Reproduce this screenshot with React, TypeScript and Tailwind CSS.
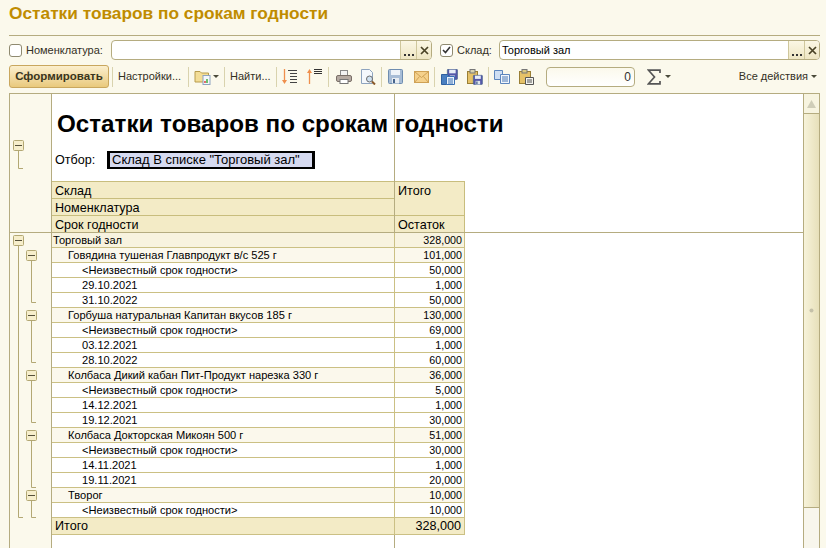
import React from "react";

const rows: [string, string, number][] = [
  ["Торговый зал", "328,000", 0],
  ["Говядина тушеная Главпродукт в/с 525 г", "101,000", 1],
  ["<Неизвестный срок годности>", "50,000", 2],
  ["29.10.2021", "1,000", 2],
  ["31.10.2022", "50,000", 2],
  ["Горбуша натуральная Капитан вкусов 185 г", "130,000", 1],
  ["<Неизвестный срок годности>", "69,000", 2],
  ["03.12.2021", "1,000", 2],
  ["28.10.2022", "60,000", 2],
  ["Колбаса Дикий кабан Пит-Продукт нарезка 330 г", "36,000", 1],
  ["<Неизвестный срок годности>", "5,000", 2],
  ["14.12.2021", "1,000", 2],
  ["19.12.2021", "30,000", 2],
  ["Колбаса Докторская Микоян 500 г", "51,000", 1],
  ["<Неизвестный срок годности>", "30,000", 2],
  ["14.11.2021", "1,000", 2],
  ["19.11.2021", "20,000", 2],
  ["Творог", "10,000", 1],
  ["<Неизвестный срок годности>", "10,000", 2],
];

const Sep = ({ ml, mr }: { ml: string; mr: string }) => (
  <div className={`w-px h-[20px] bg-[#d9d3ae] ${ml} ${mr}`} />
);

const Box = ({ x, y }: { x: number; y: number }) => (
  <g>
    <rect x={x + 0.5} y={y + 0.5} width={10} height={10} rx={1} fill="#f6eecb" stroke="#b3a874" />
    <path d={`M${x + 2} ${y + 5.5}H${x + 9}`} stroke="#55503a" />
  </g>
);

const Caret = () => (
  <svg width="6" height="3" viewBox="0 0 6 3" className="shrink-0"><path d="M0 0h6L3 3z" fill="#4a4a3a" /></svg>
);

const FieldButtons = () => (
  <>
    <div className="w-[16px] h-full border-l border-[#cfc79c] bg-gradient-to-b from-[#fbf7e4] to-[#eee6c3] flex items-end justify-center pb-[3px]">
      <svg width="10" height="2" viewBox="0 0 10 2"><path d="M0 0h2v2H0zM4 0h2v2H4zM8 0h2v2H8z" fill="#333" /></svg>
    </div>
    <div className="w-[15px] h-full border-l border-[#cfc79c] bg-gradient-to-b from-[#fbf7e4] to-[#eee6c3] flex items-center justify-center">
      <svg width="9" height="9" viewBox="0 0 9 9"><path d="M1 1l7 7M8 1L1 8" stroke="#4a4326" strokeWidth="1.7" /></svg>
    </div>
  </>
);

const Check = ({ on }: { on?: boolean }) => (
  <div className="w-[13px] h-[13px] rounded-[3px] border border-[#8f8a70] bg-white flex items-center justify-center shrink-0">
    {on && (
      <svg width="9" height="8" viewBox="0 0 9 8"><path d="M1 4l2.5 2.5L8 1" fill="none" stroke="#333" strokeWidth="1.6" /></svg>
    )}
  </div>
);

const Gutter = () => {
  const lvl2 = [
    [250, 302],
    [310, 362],
    [370, 422],
    [430, 487],
    [490, 517],
  ];
  return (
    <svg width="41" height="454" viewBox="10 94 41 454" className="block">
      <g fill="none" stroke="#b3a874">
        <path d="M18.5 151V168.5H23" />
        <path d="M18.5 245V517.5H23" />
        {lvl2.map(([a, b]) => (
          <path key={a} d={`M31.5 ${a + 10}V${b + 0.5}H36`} />
        ))}
      </g>
      <Box x={13} y={140} />
      <Box x={13} y={235} />
      {lvl2.map(([a]) => (
        <Box key={a} x={26} y={a} />
      ))}
    </svg>
  );
};

const Ic = ({ children, w = 16, h = 16, vb = "0 0 16 16", cls = "" }: { children: React.ReactNode; w?: number; h?: number; vb?: string; cls?: string }) => (
  <svg width={w} height={h} viewBox={vb} className={`shrink-0 ${cls}`}>{children}</svg>
);

const Floppy = ({ c = "#5f86b5" }: { c?: string }) => (
  <g>
    <rect x=".5" y=".5" width="14" height="14" rx="1" fill={c} stroke="#46648c" />
    <rect x="3" y="1" width="9" height="5" fill="#e8eef6" />
    <rect x="4" y="9" width="7" height="5.5" fill="#dfe5ec" />
    <rect x="5" y="10" width="2" height="4" fill="#46648c" />
  </g>
);

export default function App() {
  return (
    <div className="w-[826px] h-[548px] overflow-hidden bg-[#fbf9ec] flex flex-col font-['Liberation_Sans',Arial,sans-serif] text-[#222]">
      <div className="h-[36px] ml-[9px] mr-[6px] border-b border-[#b5ac80] pt-[4px] text-[17.3px] leading-[18px] font-bold text-[#c08c00] whitespace-nowrap shrink-0">
        Остатки товаров по срокам годности
      </div>

      <div className="h-[20px] mt-[4px] ml-[9px] mr-[6px] flex items-center text-[11px] text-[#33301f] shrink-0">
        <Check />
        <span className="ml-[4px] w-[85px]">Номенклатура:</span>
        <div className="w-[321px] h-full flex rounded-[4px] border border-[#b5ac80] bg-white overflow-hidden">
          <div className="flex-1" />
          <FieldButtons />
        </div>
        <div className="ml-[8px]"><Check on /></div>
        <span className="ml-[4px] w-[42px]">Склад:</span>
        <div className="flex-1 h-full flex rounded-[4px] border border-[#b5ac80] bg-white overflow-hidden">
          <div className="flex-1 pl-[2px] text-[11px] leading-[18px] text-black">Торговый зал</div>
          <FieldButtons />
        </div>
      </div>

      <div className="h-[23px] mt-[5px] ml-[9px] mr-[6px] flex items-center text-[11px] text-[#33301f] shrink-0">
        <div className="w-[100px] h-[23px] rounded-[3px] border border-[#c9a75e] bg-gradient-to-b from-[#fbefcd] to-[#e9c97c] flex items-center justify-center font-bold text-[11.5px] text-[#3a3520]">
          Сформировать
        </div>
        <Sep ml="ml-[3px]" mr="mr-[5px]" />
        <span className="w-[65px] whitespace-nowrap">Настройки...</span>
        <Sep ml="ml-[5px]" mr="mr-[5px]" />
        <Ic w={17} h={16}>
          <path d="M.5 2.5h5l1.5 1.5h7v9H.5z" fill="#f3dd96" stroke="#b89c4c" />
          <rect x="8.5" y="6.5" width="7" height="9" fill="#f4f7fb" stroke="#8ea4bf" />
          <path d="M10.5 14v-2" stroke="#d33" strokeWidth="1.4" /><path d="M12.5 14v-4" stroke="#3a3" strokeWidth="1.4" />
        </Ic>
        <span className="ml-[2px]"><Caret /></span>
        <Sep ml="ml-[5px]" mr="mr-[5px]" />
        <span className="w-[41px] whitespace-nowrap">Найти...</span>
        <Sep ml="ml-[5px]" mr="mr-[5px]" />
        <Ic w={15} h={17} vb="0 0 15 17">
          <path d="M2.5 1v13" stroke="#ef8f4d" strokeWidth="1.3" /><path d="M0 12l2.5 4L5 12z" fill="#ef8f4d" />
          <path d="M6 2.5h9M8 5.5h7M8 8.5h7M8 11.5h7M8 14.5h7" stroke="#444" />
        </Ic>
        <Ic w={15} h={17} vb="0 0 15 17" cls="ml-[10px]">
          <path d="M2.5 16V4" stroke="#ef8f4d" strokeWidth="1.3" /><path d="M0 5l2.5-4L5 5z" fill="#ef8f4d" />
          <path d="M7 1.5h8M7 3.5h8M7 5.5h8" stroke="#333" />
        </Ic>
        <Sep ml="ml-[6px]" mr="mr-[7px]" />
        <Ic w={16} h={16}>
          <rect x="4.5" y="1.5" width="7" height="5" fill="#f3f3f3" stroke="#8a8a8a" />
          <rect x=".5" y="6.5" width="15" height="6" rx="1.5" fill="#b5aaa2" stroke="#7a6f68" />
          <rect x="4" y="10.5" width="8" height="4" fill="#fff" stroke="#777" />
        </Ic>
        <Ic w={16} h={16} cls="ml-[8px]">
          <path d="M1.5.5h8l3 3v11h-11z" fill="#f4f8fc" stroke="#8ea4bf" />
          <circle cx="9.5" cy="10" r="3" fill="#cfe2f2" stroke="#6b6b6b" /><path d="M12 12.5l3 3" stroke="#8a5a2a" strokeWidth="2" />
        </Ic>
        <Sep ml="ml-[5px]" mr="mr-[6px]" />
        <Ic w={15} h={15} vb="0 0 15 15">
          <rect x=".5" y=".5" width="14" height="14" rx="1" fill="#a8bdd6" stroke="#6f8db0" />
          <rect x="3" y="1" width="9" height="5" fill="#eef3f8" />
          <rect x="4" y="9" width="7" height="5.5" fill="#e8edf2" />
          <rect x="5" y="10" width="2" height="4" fill="#46648c" />
        </Ic>
        <Ic w={15} h={12} vb="0 0 15 12" cls="ml-[11px]">
          <rect x=".5" y=".5" width="14" height="11" fill="#f5d18c" stroke="#cfa155" />
          <path d="M.5.5l7 6 7-6M.5 11.5l5-6M14.5 11.5l-5-6" fill="none" stroke="#cfa155" />
        </Ic>
        <Sep ml="ml-[5px]" mr="mr-[6px]" />
        <Ic w={17} h={16} vb="0 0 17 16">
          <g transform="translate(6 0) scale(.72)"><Floppy c="#5558a8" /></g>
          <path d="M.5 5.5h6l3 3v7h-9z" fill="#4a7fc0" stroke="#2f5f9e" />
          <path d="M5.5 7.5h8v8h-8z" fill="#e9f1fb" stroke="#3a70b4" />
          <path d="M7 10h5M7 12h5M7 14h5" stroke="#3a70b4" />
        </Ic>
        <Ic w={17} h={16} vb="0 0 17 16" cls="ml-[8px]">
          <rect x="1.5" y="2.5" width="10" height="12" fill="#e6c268" stroke="#9a7f35" />
          <rect x="4" y="0.5" width="5" height="3.5" fill="#d8d2b0" stroke="#777" />
          <g transform="translate(7 6) scale(.65)"><Floppy c="#5558a8" /></g>
        </Ic>
        <Sep ml="ml-[5px]" mr="mr-[5px]" />
        <Ic w={16} h={14} vb="0 0 16 14">
          <path d="M.5.5h8v9h-8z" fill="#cfdff3" stroke="#5d86bd" />
          <path d="M6.5 4.5h9v9h-9z" fill="#f1f6fc" stroke="#5d86bd" />
          <path d="M8 7h6M8 9h6M8 11h6" stroke="#4a78b4" />
        </Ic>
        <Ic w={16} h={16} cls="ml-[8px]">
          <rect x="1.5" y="2.5" width="11" height="12" fill="#e6c268" stroke="#9a7f35" />
          <rect x="4" y="0.5" width="5" height="3.5" fill="#d8c880" stroke="#777" />
          <path d="M7.5 8.5h8v7h-8z" fill="#f4f4ee" stroke="#555" /><path d="M9 11h5M9 13h5" stroke="#555" />
        </Ic>
        <div className="ml-[12px] w-[89px] h-[20px] rounded-[4px] border border-[#b5ac80] bg-gradient-to-b from-[#fbf9ec] to-white text-right pr-[3px] text-[12px] leading-[19px] text-[#333]">0</div>
        <Ic w={14} h={16} vb="0 0 14 16" cls="ml-[12px]">
          <path d="M13 4V1.2H1.5L7.5 8l-6 6.8H13V12" fill="none" stroke="#555" strokeWidth="1.7" />
        </Ic>
        <span className="ml-[4px]"><Caret /></span>
        <span className="ml-auto whitespace-nowrap">Все действия</span>
        <span className="ml-[3px] mr-[3px]"><Caret /></span>
      </div>

      <div className="mt-[5px] ml-[9px] mr-[6px] flex-1 min-h-0 flex border-t border-l border-[#b5ac80]">
        <div className="w-[42px] shrink-0 border-r border-[#b5ac80] relative">
          <Gutter />
          <div className="absolute left-0 right-0 top-[138px] h-px bg-[#b5ac80]" />
        </div>

        <div className="w-[751px] shrink-0 bg-white flex flex-col text-black">
          <div className="h-[139px] shrink-0 flex border-b border-[#b5ac80]">
            <div className="w-[343px] shrink-0 border-r border-[#b5ac80] flex flex-col">
              <div className="h-[87px] shrink-0">
                <div className="pl-[5px] pt-[16px] text-[24.2px] leading-[27px] font-bold whitespace-nowrap">
                  Остатки товаров по срокам годности
                </div>
                <div className="pl-[3px] mt-[14px] flex items-center text-[12.6px]">
                  <span className="w-[52px]">Отбор:</span>
                  <div className="w-[208px] h-[18px] border-y-2 border-x-[3px] border-black bg-[#d6daf0] pl-[2px] text-[13px] leading-[14px] whitespace-nowrap">
                    Склад В списке "Торговый зал"
                  </div>
                </div>
              </div>
              <div className="flex-1 flex flex-col text-[12.6px] bg-[#f3ebc6]">
                {["Склад", "Номенклатура", "Срок годности"].map((t) => (
                  <div key={t} className="h-[17px] border-t border-[#c8bd7d] pl-[3px] leading-[18px]">{t}</div>
                ))}
              </div>
            </div>
            <div className="w-[70px] shrink-0 mt-[87px] bg-[#f3ebc6] border-t border-r border-[#c8bd7d] text-[12.6px] flex flex-col">
              <div className="h-[34px] shrink-0 pl-[3px] leading-[18px] border-b border-[#c8bd7d]">Итого</div>
              <div className="h-[16px] shrink-0 pl-[3px] leading-[18px]">Остаток</div>
            </div>
          </div>

          <div className="flex-1 flex flex-col">
            {rows.map(([t, v, l], i) => {
              const bg = l === 0 ? "bg-[#f8f3df]" : l === 1 ? "bg-[#fbf8ec]" : "bg-white";
              const pad = l === 0 ? "pl-[1px]" : l === 1 ? "pl-[16px]" : "pl-[30px]";
              return (
                <div key={i} className="h-[15px] shrink-0 flex leading-[14px]">
                  <div className={`w-[343px] shrink-0 border-r border-b border-[#cbc084] whitespace-nowrap text-[11.1px] ${pad} ${bg}`}>{t}</div>
                  <div className={`w-[70px] shrink-0 border-r border-b border-[#cbc084] text-right pr-[2px] text-[10.7px] ${bg}`}>{v}</div>
                </div>
              );
            })}
            <div className="h-[17px] shrink-0 flex text-[12.6px] leading-[17px]">
              <div className="w-[343px] shrink-0 border-r border-b border-[#cbc084] pl-[3px] bg-[#f3ebc6]">Итого</div>
              <div className="w-[70px] shrink-0 border-r border-b border-[#cbc084] text-right pr-[3px] bg-[#f3ebc6]">328,000</div>
            </div>
            <div className="flex-1 w-[343px] border-r border-[#b5ac80]" />
          </div>
        </div>

        <div className="w-[17px] shrink-0 flex flex-col border-l border-r border-[#b5ac80]">
          <div className="h-[20px] shrink-0 border-b border-[#b5ac80] bg-[#f7f4e0] flex items-center justify-center">
            <svg width="9" height="8" viewBox="0 0 9 8"><path d="M4.5 0L9 8H0z" fill="#cfcdb8" /></svg>
          </div>
          <div className="h-[394px] shrink-0 border-b border-[#b5ac80] bg-gradient-to-r from-[#f7f3da] to-[#e7e0ba] flex items-center justify-center">
            <svg width="5" height="5" viewBox="0 0 5 5"><circle cx="2.5" cy="2.5" r="2" fill="#c4c0a8" /></svg>
          </div>
          <div className="flex-1 bg-[#f8f6ec]" />
        </div>
      </div>
    </div>
  );
}
